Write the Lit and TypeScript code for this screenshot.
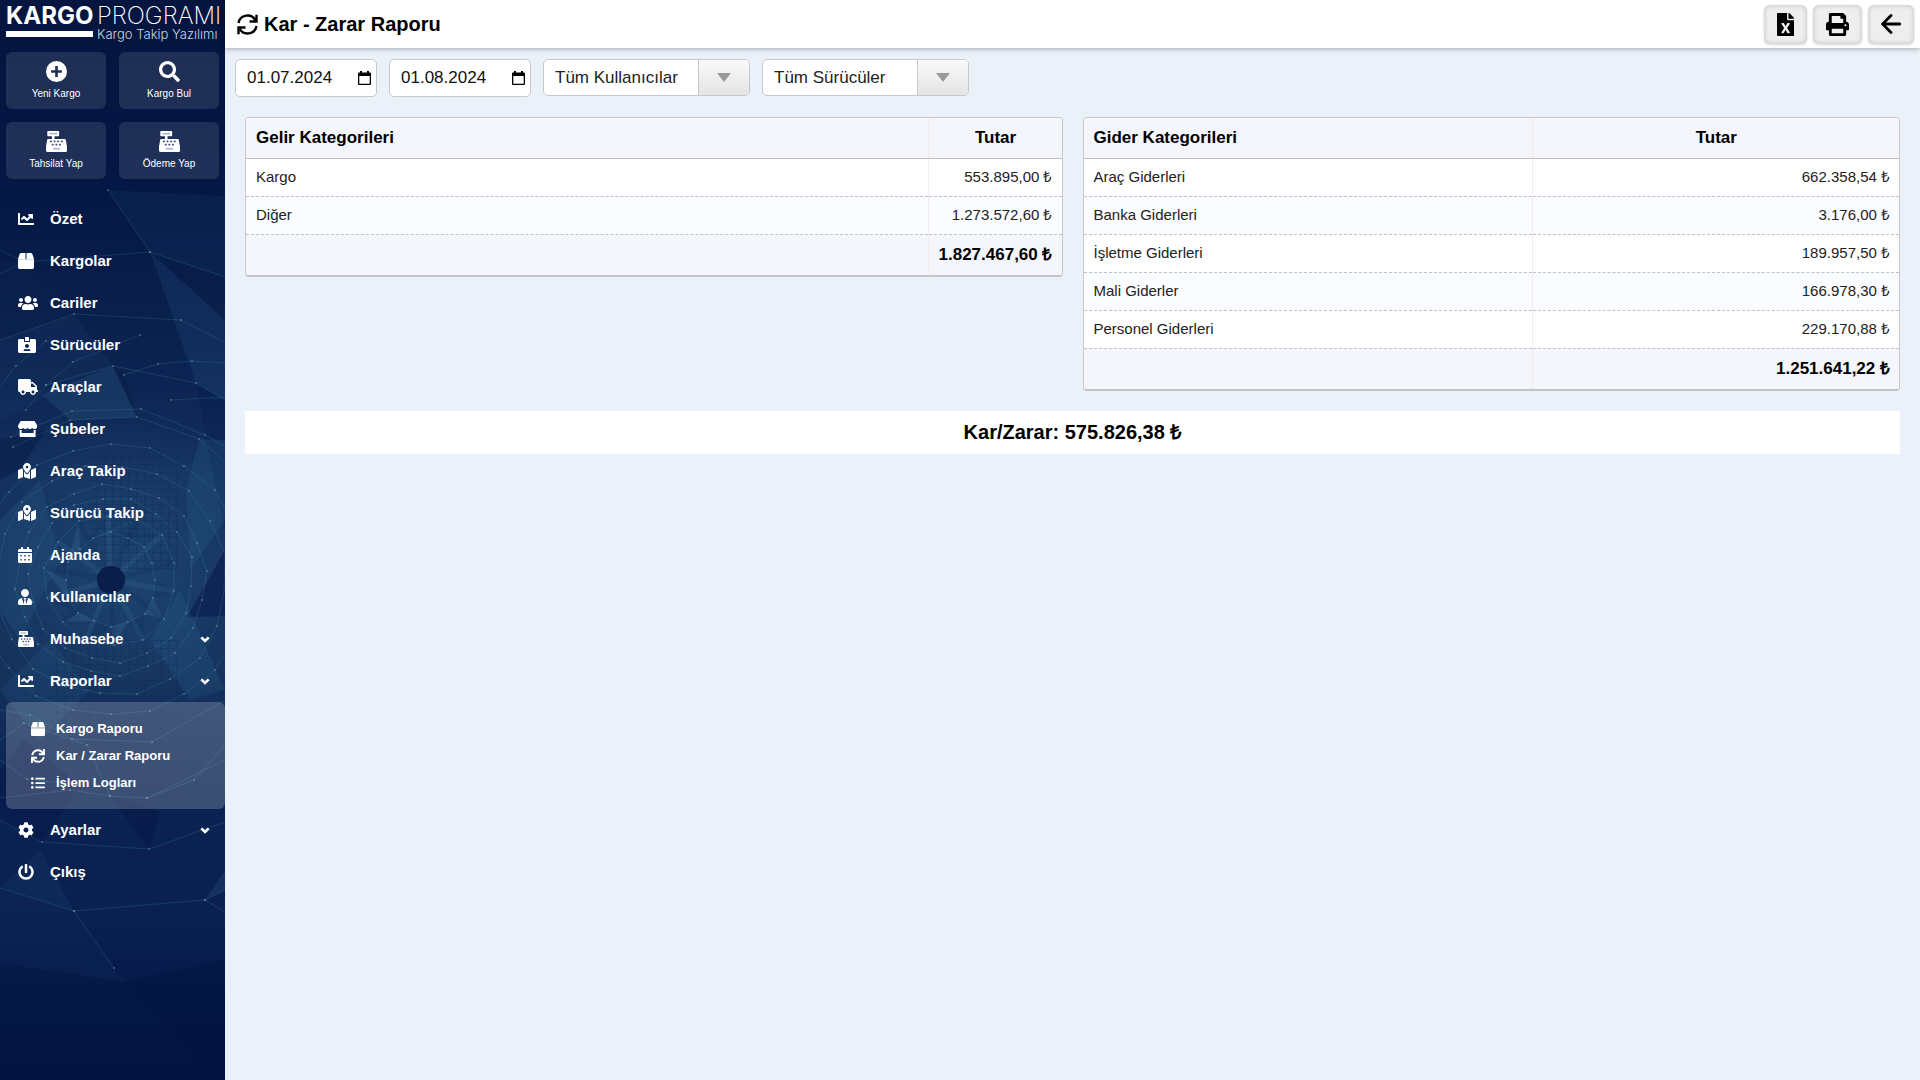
import { LitElement, html, svg, css, nothing } from "lit";
import { customElement } from "lit/decorators.js";

type Icon = { box: string; body: unknown };

const p = (d: string) => svg`<path fill="currentColor" fill-rule="evenodd" d=${d}></path>`;

const registerKeys = [
  [96, 232], [184, 232], [272, 232], [360, 232],
  [140, 312], [228, 312], [316, 312],
];

const ICONS: Record<string, Icon> = {
  plus: { box: "0 0 512 512", body: p("M256 512A256 256 0 1 0 256 0a256 256 0 1 0 0 512zM224 376V288H136c-8 0-12-5-12-12V236c0-7 4-12 12-12h88V136c0-8 5-12 12-12h40c7 0 12 4 12 12v88h88c8 0 12 5 12 12v40c0 7-4 12-12 12H288v88c0 8-5 12-12 12H236c-7 0-12-4-12-12z") },
  search: { box: "0 0 512 512", body: p("M505 442.700L405.300 343c-4.500-4.500-10.600-7-17-7H372c27.600-35.300 44-79.700 44-128C416 93.100 322.900 0 208 0S0 93.100 0 208s93.100 208 208 208c48.300 0 92.700-16.400 128-44v16.300c0 6.400 2.500 12.500 7 17l99.700 99.700c9.400 9.400 24.600 9.400 33.900 0l28.300-28.300c9.400-9.400 9.400-24.600.1-34zM208 336c-70.700 0-128-57.200-128-128 0-70.700 57.200-128 128-128 70.700 0 128 57.200 128 128 0 70.700-57.200 128-128 128z") },
  register: {
    box: "0 0 512 512",
    body: svg`
      <path fill="currentColor" d="M511.1 378.800l-26.700-160c-2.600-15.400-15.900-26.700-31.600-26.700H208v-64h96c8.800 0 16-7.200 16-16V16c0-8.800-7.200-16-16-16H48c-8.800 0-16 7.200-16 16v96c0 8.800 7.200 16 16 16h96v64H59.100c-15.600 0-29 11.300-31.600 26.700L.8 378.700c-.6 3.500-.9 7-.9 10.500V480c0 17.700 14.300 32 32 32h448c17.700 0 32-14.300 32-32v-90.700c.1-3.500-.2-7-.8-10.500z"></path>
      <rect x="80" y="46" width="192" height="36" fill="#a9b0c8"></rect>
      ${registerKeys.map(([x, y]) => svg`<rect x=${x} y=${y} width="48" height="44" rx="12" fill="#3d4a78"></rect>`)}
      <rect x="170" y="416" width="172" height="36" rx="8" fill="#a9b0c8"></rect>`,
  },
  chart: { box: "0 0 512 512", body: p("M496 384H64V80c0-8.840-7.160-16-16-16H16C7.160 64 0 71.160 0 80v336c0 17.670 14.330 32 32 32h464c8.840 0 16-7.160 16-16v-32c0-8.840-7.160-16-16-16zM464 96H345.940c-21.380 0-32.090 25.850-16.970 40.970l32.400 32.400L288 242.750l-73.370-73.370c-12.500-12.500-32.760-12.500-45.250 0l-68.690 68.690c-6.250 6.250-6.250 16.380 0 22.630l22.620 22.620c6.250 6.250 16.380 6.250 22.630 0L192 237.250l73.370 73.370c12.500 12.500 32.760 12.500 45.250 0l96-96 32.400 32.400c15.120 15.120 40.970 4.410 40.970-16.970V112c.010-8.840-7.150-16-15.990-16z") },
  box: {
    box: "0 0 512 512",
    body: svg`
      <path fill="currentColor" d="M509.500 184.600L458.900 32.800C452.400 13.200 434.100 0 413.400 0H272v192h238.700c-.4-2.500-.4-5-1.200-7.400zM240 0H98.600c-20.700 0-39 13.200-45.500 32.800L2.500 184.600c-.8 2.400-.8 4.900-1.200 7.400H240V0zM0 224v240c0 26.500 21.500 48 48 48h416c26.500 0 48-21.500 48-48V224H0z"></path>
      <rect x="0" y="190" width="512" height="36" fill="#d4d8ea"></rect>`,
  },
  users: { box: "0 0 640 512", body: p("M96 224c35.300 0 64-28.700 64-64s-28.700-64-64-64-64 28.700-64 64 28.700 64 64 64zm448 0c35.300 0 64-28.700 64-64s-28.700-64-64-64-64 28.700-64 64 28.700 64 64 64zm32 32h-64c-17.600 0-33.500 7.100-45.100 18.600 40.300 22.100 68.900 62 75.100 109.400h66c17.700 0 32-14.300 32-32v-32c0-35.300-28.700-64-64-64zm-256 0c61.900 0 112-50.100 112-112S381.900 32 320 32 208 82.100 208 144s50.100 112 112 112zm76.800 32h-8.300c-20.800 10-43.900 16-68.500 16s-47.600-6-68.500-16h-8.300C179.600 288 128 339.600 128 403.200V432c0 26.500 21.500 48 48 48h288c26.500 0 48-21.500 48-48v-28.800c0-63.600-51.600-115.200-115.200-115.200zm-223.700-13.400C161.500 263.100 145.600 256 128 256H64c-35.300 0-64 28.700-64 64v32c0 17.700 14.300 32 32 32h65.900c6.300-47.400 34.900-87.300 75.200-109.400z") },
  badge: { box: "0 0 576 512", body: p("M528 64H384v96H192V64H48C21.500 64 0 85.500 0 112v352c0 26.500 21.500 48 48 48h480c26.500 0 48-21.500 48-48V112c0-26.500-21.500-48-48-48zM288 224c35.300 0 64 28.700 64 64s-28.700 64-64 64-64-28.700-64-64 28.700-64 64-64zm93.300 224H194.700c-10.400 0-18.800-10-15.600-19.800 8.300-25.600 32.400-44.200 60.900-44.200h8.200c12.300 5.100 25.700 8 39.800 8s27.600-2.900 39.800-8h8.200c28.400 0 52.500 18.500 60.900 44.200 3.200 9.900-5.200 19.800-15.600 19.800zM352 32c0-17.700-14.300-32-32-32h-64c-17.700 0-32 14.300-32 32v96h128V32z") },
  truck: { box: "0 0 640 512", body: p("M624 352h-16V243.900c0-12.700-5.100-24.900-14.100-33.900L494 110.100c-9-9-21.200-14.100-33.900-14.100H416V48c0-26.500-21.500-48-48-48H48C21.500 0 0 21.500 0 48v320c0 26.500 21.500 48 48 48h16c0 53 43 96 96 96s96-43 96-96h128c0 53 43 96 96 96s96-43 96-96h48c8.800 0 16-7.200 16-16v-32c0-8.800-7.200-16-16-16zM160 464c-26.500 0-48-21.500-48-48s21.500-48 48-48 48 21.500 48 48-21.500 48-48 48zm320 0c-26.500 0-48-21.500-48-48s21.500-48 48-48 48 21.500 48 48-21.500 48-48 48zm80-208H416V144h44.100l99.900 99.900V256z") },
  store: { box: "0 0 616 512", body: p("M602 118.600L537.100 15C531.300 5.700 521 0 510 0H106C95 0 84.700 5.700 78.900 15L14 118.600c-33.500 53.500-3.800 127.900 58.800 136.400 4.500.6 9.100.9 13.700.9 29.600 0 55.800-13 73.800-33.100 18 20.100 44.300 33.100 73.800 33.100 29.600 0 55.800-13 73.800-33.100 18 20.100 44.300 33.100 73.800 33.100 29.600 0 55.800-13 73.800-33.100 18.100 20.100 44.300 33.100 73.800 33.100 4.700 0 9.200-.3 13.700-.9 62.800-8.400 92.600-82.800 59-136.400zM529.500 288c-10 0-19.900-1.500-29.500-3.800V384H116v-99.800c-9.600 2.200-19.500 3.800-29.500 3.800-6 0-12.100-.4-18-1.200-5.600-.8-11.100-2.100-16.400-3.600V480c0 17.700 14.300 32 32 32h448c17.700 0 32-14.300 32-32V283.200c-5.400 1.600-10.800 2.900-16.400 3.600-6.100.8-12.100 1.200-18.200 1.200z") },
  map: { box: "0 0 576 512", body: p("M288 0c-69.590 0-126 56.410-126 126 0 56.260 82.350 158.800 113.900 196.020 6.390 7.540 17.820 7.540 24.200 0C331.650 284.800 414 182.260 414 126 414 56.410 357.590 0 288 0zm0 168c-23.200 0-42-18.800-42-42s18.800-42 42-42 42 18.800 42 42-18.800 42-42 42zM20.120 215.950A32.006 32.006 0 0 0 0 245.660v250.320c0 11.320 11.430 19.060 21.940 14.860L160 448V214.920c-8.840-15.980-16.070-31.540-21.250-46.420L20.120 215.950zM288 359.670c-14.070 0-27.380-6.180-36.510-16.960-19.660-23.200-40.570-49.620-59.490-76.720v182l192 64V266c-18.920 27.090-39.820 53.520-59.490 76.720-9.130 10.770-22.440 16.950-36.510 16.950zm266.060-198.510L416 224v288l139.880-55.950A31.996 31.996 0 0 0 576 426.340V176.020c0-11.320-11.430-19.060-21.940-14.860z") },
  calendar: {
    box: "0 0 448 512",
    body: p(
      "M0 464c0 26.500 21.500 48 48 48h352c26.500 0 48-21.500 48-48V192H0v272zM400 64h-48V16c0-8.800-7.200-16-16-16h-32c-8.800 0-16 7.200-16 16v48H160V16c0-8.800-7.200-16-16-16h-32c-8.800 0-16 7.200-16 16v48H48C21.500 64 0 85.500 0 112v48h448v-48c0-26.500-21.500-48-48-48z" +
        [[72, 256], [200, 256], [328, 256], [72, 384], [200, 384], [328, 384]].map(([x, y]) => `M${x} ${y}h48v48h-48z`).join("")
    ),
  },
  tie: { box: "0 0 448 512", body: p("M224 256c70.700 0 128-57.300 128-128S294.700 0 224 0 96 57.300 96 128s57.300 128 128 128zm95.800 32.600L272 480l-32-136 32-56h-96l32 56-32 136-47.800-191.400C56.900 292 0 350.300 0 422.400V464c0 26.500 21.500 48 48 48h352c26.500 0 48-21.500 48-48v-41.600c0-72.100-56.900-130.400-128.200-133.800z") },
  sync: { box: "0 0 512 512", body: p("M440.650 12.570l4 82.770A247.160 247.160 0 0 0 255.830 8C134.730 8 33.910 94.920 12.290 209.820A12 12 0 0 0 24.090 224h49.050a12 12 0 0 0 11.670-9.260 175.910 175.910 0 0 1 317-56.940l-101.460-4.860a12 12 0 0 0-12.570 12v47.410a12 12 0 0 0 12 12H500a12 12 0 0 0 12-12V12a12 12 0 0 0-12-12h-47.370a12 12 0 0 0-11.980 12.570zM255.830 432a175.610 175.610 0 0 1-146-77.800l101.800 4.870a12 12 0 0 0 12.570-12v-47.400a12 12 0 0 0-12-12H12a12 12 0 0 0-12 12V500a12 12 0 0 0 12 12h47.350a12 12 0 0 0 12-12.600l-4.150-82.570A247.170 247.170 0 0 0 255.830 504c121.110 0 221.930-86.920 243.550-201.820a12 12 0 0 0-11.800-14.180h-49.050a12 12 0 0 0-11.670 9.260A175.860 175.860 0 0 1 255.830 432z") },
  refresh: {
    box: "0 0 21 21",
    body: svg`<g fill="none" stroke="currentColor" stroke-width="2.400">
      <path d="M1.500 9A9 8.800 0 0 1 18.500 6.500M19.500 12A9 8.800 0 0 1 2.500 14.500"></path>
      <path d="M19.500 .8V7.500H12.500M1.500 20.200V13.500H8.500"></path></g>`,
  },
  list: { box: "0 0 512 512", body: p("M48 48a48 48 0 1 0 48 48 48 48 0 0 0-48-48zm0 160a48 48 0 1 0 48 48 48 48 0 0 0-48-48zm0 160a48 48 0 1 0 48 48 48 48 0 0 0-48-48zm448 16H176a16 16 0 0 0-16 16v32a16 16 0 0 0 16 16h320a16 16 0 0 0 16-16v-32a16 16 0 0 0-16-16zm0-320H176a16 16 0 0 0-16 16v32a16 16 0 0 0 16 16h320a16 16 0 0 0 16-16V80a16 16 0 0 0-16-16zm0 160H176a16 16 0 0 0-16 16v32a16 16 0 0 0 16 16h320a16 16 0 0 0 16-16v-32a16 16 0 0 0-16-16z") },
  cog: { box: "0 0 512 512", body: p("M487.400 315.700l-42.600-24.600c4.300-23.200 4.300-47 0-70.200l42.600-24.600c4.900-2.800 7.100-8.600 5.500-14-11.100-35.600-30-67.800-54.700-94.600-3.800-4.100-10-5.100-14.800-2.300L380.800 110c-17.900-15.400-38.500-27.300-60.800-35.100V25.800c0-5.600-3.900-10.500-9.400-11.700-36.700-8.200-74.300-7.800-109.200 0-5.500 1.200-9.400 6.100-9.400 11.700V75c-22.200 7.900-42.800 19.800-60.800 35.100L88.700 85.500c-4.900-2.800-11-1.900-14.800 2.300-24.700 26.700-43.600 58.900-54.700 94.600-1.700 5.400.6 11.200 5.500 14L67.300 221c-4.300 23.200-4.300 47 0 70.200l-42.600 24.600c-4.900 2.800-7.100 8.600-5.500 14 11.100 35.600 30 67.800 54.700 94.600 3.800 4.100 10 5.100 14.800 2.300l42.600-24.600c17.900 15.400 38.500 27.300 60.800 35.100v49.200c0 5.600 3.900 10.500 9.400 11.700 36.700 8.200 74.300 7.800 109.200 0 5.500-1.200 9.400-6.100 9.400-11.700v-49.200c22.200-7.900 42.800-19.800 60.800-35.100l42.600 24.600c4.900 2.800 11 1.900 14.800-2.300 24.700-26.700 43.600-58.900 54.700-94.600 1.500-5.500-.7-11.300-5.600-14.100zM256 336c-44.100 0-80-35.900-80-80s35.900-80 80-80 80 35.900 80 80-35.900 80-80 80z") },
  power: { box: "0 0 512 512", body: p("M400 54.100c63 45 104 118.600 104 201.900 0 136.800-110.800 247.700-247.500 248C120 504.300 8.200 393 8 256.400 7.900 173.100 48.900 99.300 111.800 54.200c11.700-8.300 28-4.800 35 7.700L162.600 90c5.900 10.500 3.100 23.800-6.600 31-41.500 30.800-68 79.600-68 134.900-.1 92.300 74.500 168.100 168 168.100 91.600 0 168.600-74.200 168-169.100-.3-51.800-24.700-101.800-68.100-134-9.700-7.200-12.400-20.500-6.500-30.900l15.800-28.100c7-12.400 23.200-16.100 34.800-7.800zM296 264V24c0-13.300-10.700-24-24-24h-32c-13.300 0-24 10.700-24 24v240c0 13.300 10.700 24 24 24h32c13.300 0 24-10.700 24-24z") },
  chevron: { box: "0 0 10 12", body: svg`<path d="M1.300 4.400L5 8l3.700-3.600" fill="none" stroke="currentColor" stroke-width="2.600"></path>` },
  excel: { box: "0 0 384 512", body: p("M224 136V0H24C10.700 0 0 10.700 0 24v464c0 13.300 10.700 24 24 24h336c13.300 0 24-10.700 24-24V160H248c-13.200 0-24-10.800-24-24zm60.100 106.500L224 336l60.100 93.500c5.100 8-.6 18.500-10.100 18.500h-34.900c-4.400 0-8.500-2.400-10.600-6.300C208.900 405.500 192 373 192 373c-6.400 14.800-10 20-36.600 68.800-2.100 3.900-6.100 6.300-10.500 6.300H110c-9.500 0-15.200-10.500-10.100-18.500l60.300-93.500-60.300-93.500c-5.200-8 .6-18.500 10.100-18.500h34.800c4.400 0 8.500 2.400 10.600 6.300 26.100 48.800 20 33.600 36.600 68.500 0 0 6.100-11.700 36.600-68.500 2.100-3.900 6.200-6.300 10.600-6.300H274c9.500-.1 15.200 10.400 10.100 18.400zM384 121.900v6.100H256V0h6.100c6.400 0 12.500 2.500 17 7l97.900 98c4.500 4.500 7 10.600 7 16.900z") },
  print: { box: "0 0 512 512", body: p("M448 192V77.250c0-8.490-3.370-16.620-9.370-22.630L393.370 9.370c-6-6-14.140-9.370-22.630-9.370H96C78.330 0 64 14.330 64 32v160c-35.350 0-64 28.650-64 64v112c0 8.840 7.160 16 16 16h48v96c0 17.670 14.330 32 32 32h320c17.670 0 32-14.330 32-32v-96h48c8.840 0 16-7.160 16-16V256c0-35.350-28.650-64-64-64zm-64 256H128v-96h256v96zm0-224H128V64h192v48c0 8.840 7.160 16 16 16h48v96zm48 72c-13.250 0-24-10.750-24-24 0-13.260 10.750-24 24-24s24 10.740 24 24c0 13.250-10.750 24-24 24z") },
  back: { box: "0 0 20 20", body: svg`<path d="M18.700 10H2M10 1.600L1.600 10l8.400 8.400" fill="none" stroke="currentColor" stroke-width="2.800" stroke-linecap="round" stroke-linejoin="round"></path>` },
  date: { box: "0 0 13 14", body: p("M2 0h2v1.500h5V0h2v1.500h1a1 1 0 0 1 1 1V13a1 1 0 0 1-1 1H1a1 1 0 0 1-1-1V2.500a1 1 0 0 1 1-1h1zM1.300 5v7.700h10.400V5z") },
  down: { box: "0 0 14 9", body: p("M0 0h14L7 9z") },
};

const icon = (name: string, cls: string) =>
  html`<svg class="icon ${cls}" viewBox=${ICONS[name].box} aria-hidden="true">${ICONS[name].body}</svg>`;

const QUICK = [
  ["plus", "Yeni Kargo"],
  ["search", "Kargo Bul"],
  ["register", "Tahsilat Yap"],
  ["register", "Ödeme Yap"],
];

type MenuItem = { icon: string; label: string; open?: boolean; children?: [string, string][] };

const MENU: MenuItem[] = [
  { icon: "chart", label: "Özet" },
  { icon: "box", label: "Kargolar" },
  { icon: "users", label: "Cariler" },
  { icon: "badge", label: "Sürücüler" },
  { icon: "truck", label: "Araçlar" },
  { icon: "store", label: "Şubeler" },
  { icon: "map", label: "Araç Takip" },
  { icon: "map", label: "Sürücü Takip" },
  { icon: "calendar", label: "Ajanda" },
  { icon: "tie", label: "Kullanıcılar" },
  { icon: "register", label: "Muhasebe", children: [] },
  {
    icon: "chart",
    label: "Raporlar",
    open: true,
    children: [
      ["box", "Kargo Raporu"],
      ["sync", "Kar / Zarar Raporu"],
      ["list", "İşlem Logları"],
    ],
  },
  { icon: "cog", label: "Ayarlar", children: [] },
  { icon: "power", label: "Çıkış" },
];

type Point = [number, number];

const CENTER: Point = [111, 580];

const ring = (r: number, n: number, turn: number): Point[] =>
  Array.from({ length: n }, (_, i) => {
    const a = ((i + turn) / n) * Math.PI * 2;
    const wobble = r + ((i * 7) % 5) - 2;
    return [Math.round(CENTER[0] + Math.cos(a) * wobble), Math.round(CENTER[1] + Math.sin(a) * wobble)];
  });

const RINGS = [ring(46, 16, 0), ring(66, 14, 0.4), ring(82, 18, 0.2), ring(95, 20, 0.7), ring(116, 20, 0.3), ring(136, 22, 0.5)];

const LINES: Point[][] = [
  [[108, 190], [150, 252], [225, 277]],
  [[0, 274], [24, 262], [150, 252]],
  [[0, 250], [24, 262]],
  [[0, 340], [74, 314], [181, 320], [225, 342]],
  [[0, 386], [16, 366], [46, 341]],
  [[26, 410], [46, 385], [73, 362], [140, 335]],
  [[46, 385], [113, 366], [196, 383], [225, 400]],
  [[124, 375], [158, 364], [192, 361], [225, 363]],
  [[171, 400], [225, 397]],
  [[11, 437], [72, 411], [141, 409], [205, 435], [225, 446]],
  [[13, 447], [70, 420], [137, 417], [199, 439], [225, 462]],
  [[0, 710], [30, 715], [72, 739], [152, 742], [225, 700]],
  [[0, 740], [24, 723], [87, 745], [110, 796], [147, 798], [225, 760]],
  [[0, 798], [70, 790], [110, 796]],
  [[0, 760], [27, 779], [80, 785]],
  [[147, 798], [194, 780], [225, 745]],
  [[0, 820], [42, 842], [149, 849], [225, 822]],
  [[0, 888], [74, 911], [205, 900], [225, 890]],
  [[205, 900], [225, 912]],
  [[74, 911], [114, 968]],
];

const FACETS: [string, string, number][] = [
  ["108,190 225,196 225,277 150,252", "#1d4470", 0.18],
  ["150,252 225,320 225,400 196,383", "#2a5c88", 0.22],
  ["0,340 74,314 113,366 0,420", "#1a3d69", 0.25],
  ["0,262 24,262 74,314 0,335", "#0b2150", 0.5],
  ["42,395 113,366 137,417 70,420", "#3b7196", 0.22],
  ["113,366 137,417 124,375", "#081b49", 0.4],
  ["196,383 225,400 225,530 205,435", "#061a49", 0.3],
  ["199,439 225,440 225,520 190,570 186,490", "#2f6d97", 0.2],
  ["0,440 46,430 20,470 0,480", "#071a48", 0.5],
  ["0,520 40,480 60,560 20,640 0,610", "#2d6a92", 0.2],
  ["225,550 225,616 187,617", "#081a4c", 0.6],
  ["0,690 50,640 90,690 40,740", "#2d6a92", 0.18],
  ["150,640 180,590 225,690 190,700", "#2f6d97", 0.2],
  ["0,770 24,740 80,785 42,842 0,820", "#05164a", 0.5],
  ["110,796 149,849 160,812", "#061543", 0.4],
  ["0,888 40,850 74,911", "#153564", 0.4],
  ["74,911 205,900 225,912 225,960 124,982", "#0a2152", 0.3],
  ["0,888 74,911 124,982 0,963", "#0e2958", 0.4],
  ["205,900 225,870 225,890", "#2a5380", 0.3],
  ["124,982 225,960 225,1080 190,1050", "#020f3a", 0.2],
];

const backdrop = html`
  <svg class="backdrop" viewBox="0 0 225 1080" preserveAspectRatio="xMidYMin slice" aria-hidden="true">
    <defs>
      <linearGradient id="depth" x1="0" y1="0" x2="0" y2="1">
        <stop offset="0" stop-color="#04153f"></stop>
        <stop offset="0.14" stop-color="#041643"></stop>
        <stop offset="0.26" stop-color="#081d4a"></stop>
        <stop offset="0.36" stop-color="#0d2553"></stop>
        <stop offset="0.44" stop-color="#15325f"></stop>
        <stop offset="0.62" stop-color="#15325d"></stop>
        <stop offset="0.74" stop-color="#0b2352"></stop>
        <stop offset="0.84" stop-color="#0a2150"></stop>
        <stop offset="0.92" stop-color="#041846"></stop>
        <stop offset="1" stop-color="#031342"></stop>
      </linearGradient>
      <radialGradient id="glow" gradientUnits="userSpaceOnUse" cx="125" cy="570" r="150">
        <stop offset="0" stop-color="#2c6590" stop-opacity="0.35"></stop>
        <stop offset="1" stop-color="#2c6590" stop-opacity="0"></stop>
      </radialGradient>
      <pattern id="grid" width="8" height="8" patternUnits="userSpaceOnUse">
        <path d="M0 0H8M0 0V8" stroke="#0b2350" stroke-width="1.500" opacity="0.35"></path>
      </pattern>
    </defs>
    <rect width="225" height="1080" fill="url(#depth)"></rect>
    <rect y="420" width="225" height="300" fill="url(#glow)"></rect>
    ${FACETS.map(([points, fill, o]) => svg`<polygon points=${points} fill=${fill} opacity=${o}></polygon>`)}
    ${RINGS[1].map((pt, i) => {
      const a = RINGS[0][(i + 1) % 16];
      return svg`<polygon points="${a.join()} ${pt.join()} ${RINGS[0][i].join()}" fill=${i % 2 ? "#4a86ab" : "#0b2453"} opacity="0.2"></polygon>
        <path d="M${CENTER.join(" ")}L${pt.join(" ")}" stroke=${i % 2 ? "#0c2554" : "#4383a5"} stroke-width="5" opacity="0.16"></path>`;
    })}
    <rect x="50" y="640" width="130" height="160" fill="url(#grid)"></rect>
    <rect x="90" y="450" width="90" height="120" fill="url(#grid)"></rect>
    <circle cx="111" cy="580" r="14" fill="#0b1d4b"></circle>
    ${RINGS.map((pts) => svg`<polygon points=${pts.map((q) => q.join()).join(" ")} fill="none" stroke="#3a8ba0" stroke-width="1" opacity="0.25"></polygon>`)}
    ${LINES.map((pts) => svg`<polyline points=${pts.map((q) => q.join()).join(" ")} fill="none" stroke="#2f7d97" stroke-width="1" opacity="0.3"></polyline>`)}
    ${[...RINGS, ...LINES].flat().filter(([x]) => x > 2 && x < 223).map(([x, y]) => svg`<circle cx=${x} cy=${y} r="1" fill="#8aa6c6" opacity="0.45"></circle>`)}
  </svg>`;

type Report = { id: string; head: string; rows: [string, string][]; total: string };

const INCOME: Report = {
  id: "income",
  head: "Gelir Kategorileri",
  rows: [
    ["Kargo", "553.895,00 ₺"],
    ["Diğer", "1.273.572,60 ₺"],
  ],
  total: "1.827.467,60 ₺",
};

const EXPENSE: Report = {
  id: "expense",
  head: "Gider Kategorileri",
  rows: [
    ["Araç Giderleri", "662.358,54 ₺"],
    ["Banka Giderleri", "3.176,00 ₺"],
    ["İşletme Giderleri", "189.957,50 ₺"],
    ["Mali Giderler", "166.978,30 ₺"],
    ["Personel Giderleri", "229.170,88 ₺"],
  ],
  total: "1.251.641,22 ₺",
};

@customElement("side-menu")
class SideMenu extends LitElement {
  static styles = css`
    :host { display: block; position: relative; width: 225px; flex: none; overflow: hidden; background: #04153f; color: #fff; }
    * { box-sizing: border-box; }
    .backdrop { position: absolute; inset: 0; width: 100%; height: 100%; }
    .content { position: relative; }
    .icon { display: block; height: 16px; }
    .logo { display: grid; grid-template-columns: 87px auto; column-gap: 4px; padding: 4px 0 0 6px; height: 52px; align-content: start; color: #fff; text-decoration: none; font-family: Inter, sans-serif; font-size: 24px; line-height: 24px; white-space: nowrap; }
    .strong { font-weight: 700; }
    .light { font-weight: 200; }
    .bar { height: 6px; margin-top: 3px; background: #fff; }
    .sub { font-size: 13px; line-height: 13px; font-weight: 300; color: #cfd6e6; }
    .quick { display: grid; grid-template-columns: 1fr 1fr; gap: 13px; padding: 0 6px; }
    .tile { display: flex; flex-direction: column; align-items: center; gap: 6px; height: 57px; padding: 9px 0 0; border: 0; border-radius: 6px; background: rgba(255, 255, 255, 0.11); color: #fff; font: 10px/12px "Liberation Sans", Arial, sans-serif; }
    .tile-icon { height: 21px; }
    ul { list-style: none; margin: 0; padding: 0; }
    .menu { padding-top: 19px; }
    .link { display: flex; align-items: center; height: 42px; padding: 0 15px 0 18px; color: #fff; text-decoration: none; font: bold 15px/18px "Liberation Sans", Arial, sans-serif; }
    .slot { width: 32px; }
    .label { flex: 1; }
    .arrow { height: 12px; }
    .panel { margin: 0 0 0 6px; padding: 13px 0; border-radius: 6px; background: rgba(255, 255, 255, 0.2); }
    .child { display: flex; align-items: center; height: 27px; padding-left: 25px; color: #fff; text-decoration: none; font: bold 13px/16px "Liberation Sans", Arial, sans-serif; }
    .child-slot { width: 25px; }
    .child-icon { height: 14px; }
  `;

  render() {
    return html`
      ${backdrop}
      <div class="content">
        <a class="logo" href="#">
          <span class="strong">KARGO</span><span class="light">PROGRAMI</span>
          <span class="bar"></span><span class="sub">Kargo Takip Yazılımı</span>
        </a>
        <div class="quick">
          ${QUICK.map(([i, label]) => html`<button class="tile" type="button">${icon(i, "tile-icon")}<span>${label}</span></button>`)}
        </div>
        <nav>
          <ul class="menu">
            ${MENU.map((m) => html`
              <li>
                <a class="link" href="#">
                  <span class="slot">${icon(m.icon, "")}</span><span class="label">${m.label}</span>
                  ${m.children ? icon("chevron", "arrow") : nothing}
                </a>
                ${m.open
                  ? html`<ul class="panel">${m.children!.map(([i, label]) => html`<li><a class="child" href="#"><span class="child-slot">${icon(i, "child-icon")}</span>${label}</a></li>`)}</ul>`
                  : nothing}
              </li>`)}
          </ul>
        </nav>
      </div>`;
  }
}

@customElement("app-root")
class AppRoot extends LitElement {
  static styles = css`
    :host { display: flex; min-height: 100vh; background: #eaf1f9; color: #000; font-family: "Liberation Sans", Arial, sans-serif; }
    * { box-sizing: border-box; }
    .icon { display: block; height: 21px; }
    .page { flex: 1; min-width: 0; }
    .top { position: relative; display: flex; align-items: center; height: 48px; padding: 0 6px 0 12px; background: #fff; box-shadow: 0 0 6px rgba(0, 0, 0, 0.4); }
    h1 { display: flex; align-items: center; gap: 6px; margin: 0; flex: 1; font-size: 20px; line-height: 24px; font-weight: bold; }
    .tools { display: flex; gap: 6px; }
    .tool { display: grid; place-items: center; height: 39px; padding: 0 13px; border: 0; border-radius: 6px; background: #eee; color: #000; box-shadow: inset 0 0 5px rgba(0, 0, 0, 0.2), 0 1px 3px rgba(0, 0, 0, 0.15); }
    .tool-icon { height: 23px; }
    .back-icon { height: 20px; }
    .filters { display: flex; align-items: flex-start; gap: 12px; padding: 11px 10px 0; }
    .field { display: grid; grid-template-columns: 1fr auto; align-items: center; border: 1px solid #c8c8c8; border-radius: 5px; background: #fff; overflow: hidden; }
    .date { width: 142px; height: 38px; }
    .date input { grid-area: 1 / 1 / 2 / 3; width: 100%; height: 36px; padding: 0 0 0 11px; border: 0; background: none; font: 17px "Liberation Sans", Arial, sans-serif; color: #111; }
    .pick { grid-area: 1 / 2; padding: 0 5px 0 0; border: 0; background: none; color: #000; }
    .date-icon { height: 14px; }
    .combo { width: 207px; height: 37px; grid-template-columns: 1fr 51px; }
    select { grid-area: 1 / 1 / 2 / 3; z-index: 1; width: 100%; height: 35px; padding: 0 56px 0 11px; border: 0; appearance: none; background: none; font: 17px "Liberation Sans", Arial, sans-serif; color: #222; }
    .drop { grid-area: 1 / 2; display: grid; place-items: center; height: 35px; border-left: 1px solid #c8c8c8; background: linear-gradient(#fafafa, #e4e4e4); color: #999; }
    .down-icon { height: 9px; }
    .reports { display: grid; grid-template-columns: 1fr 1fr; align-items: start; gap: 20px; padding: 20px 20px 0; }
    .card { border: 1px solid #c8c8c8; border-bottom: 2px solid #c4c4c4; border-radius: 4px; background: #fff; overflow: hidden; }
    table { width: 100%; border-collapse: collapse; font-size: 15px; line-height: 18px; color: #222; }
    th, td { height: 38px; padding: 0 9px 0 10px; text-align: left; font-weight: normal; border-bottom: 1px dashed #bfc2c8; }
    thead th, tfoot td { height: 40px; background: #f4f6fb; color: #000; font-size: 17px; font-weight: bold; }
    thead th { border-bottom: 1px solid #c0c0c0; }
    tfoot td { height: 41px; border-bottom: 0; }
    tbody tr:nth-child(even) { background: #fafcff; }
    .amount { text-align: right; white-space: nowrap; border-left: 1px solid #ececf0; }
    thead .amount { text-align: center; }
    .income .amount { width: 133px; }
    .expense .amount { width: 45%; }
    .result { margin: 20px 20px 0; padding: 9px; background: #fff; text-align: center; font-size: 20px; line-height: 25px; font-weight: bold; }
  `;

  private date(label: string, value: string) {
    return html`<div class="field date">
      <input type="text" aria-label=${label} .value=${value} />
      <button class="pick" type="button" aria-label="Takvim">${icon("date", "date-icon")}</button>
    </div>`;
  }

  private combo(value: string) {
    return html`<div class="field combo">
      <select aria-label=${value}><option>${value}</option></select>
      <span class="drop">${icon("down", "down-icon")}</span>
    </div>`;
  }

  private report(r: Report) {
    return html`<div class="card ${r.id}">
      <table>
        <thead><tr><th scope="col">${r.head}</th><th scope="col" class="amount">Tutar</th></tr></thead>
        <tbody>${r.rows.map(([name, amount]) => html`<tr><td>${name}</td><td class="amount">${amount}</td></tr>`)}</tbody>
        <tfoot><tr><td></td><td class="amount">${r.total}</td></tr></tfoot>
      </table>
    </div>`;
  }

  render() {
    return html`
      <side-menu></side-menu>
      <main class="page">
        <header class="top">
          <h1>${icon("refresh", "")}Kar - Zarar Raporu</h1>
          <div class="tools">
            <button class="tool" type="button" aria-label="Excel">${icon("excel", "tool-icon")}</button>
            <button class="tool" type="button" aria-label="Yazdır">${icon("print", "tool-icon")}</button>
            <button class="tool" type="button" aria-label="Geri">${icon("back", "back-icon")}</button>
          </div>
        </header>
        <div class="filters">
          ${this.date("Başlangıç", "01.07.2024")}${this.date("Bitiş", "01.08.2024")}
          ${this.combo("Tüm Kullanıcılar")}${this.combo("Tüm Sürücüler")}
        </div>
        <div class="reports">${this.report(INCOME)}${this.report(EXPENSE)}</div>
        <div class="result">Kar/Zarar: 575.826,38 ₺</div>
      </main>`;
  }
}
